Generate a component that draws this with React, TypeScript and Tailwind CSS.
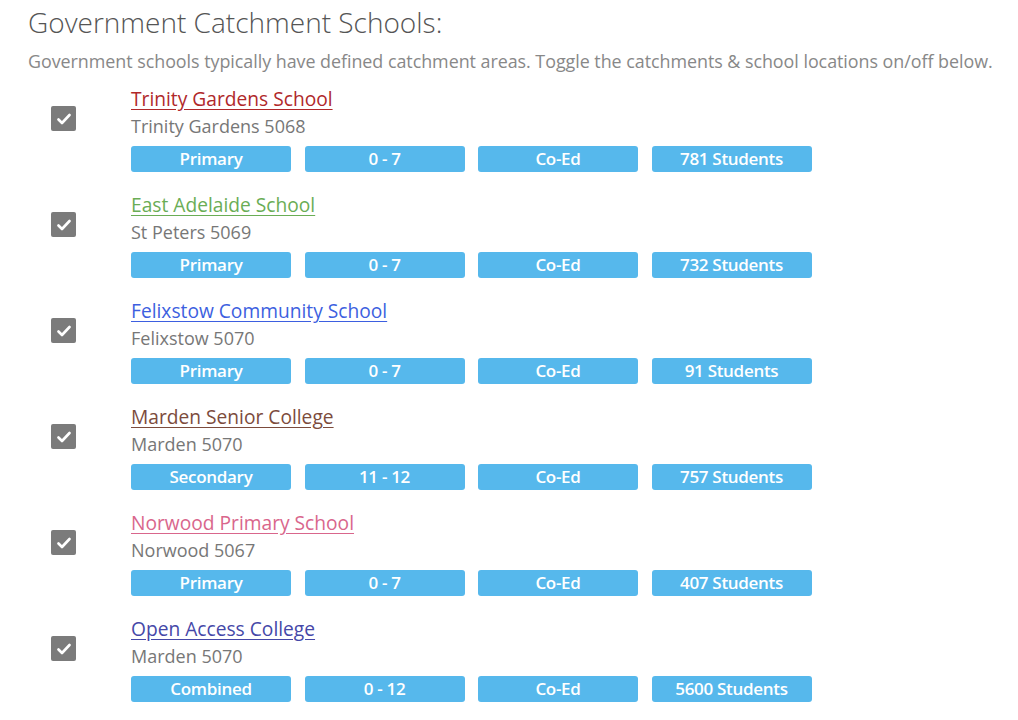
const schools = [
  { name: "Trinity Gardens School", color: "text-[#b0282a] decoration-[#b0282a]", suburb: "Trinity Gardens 5068", type: "Primary", years: "0 - 7", gender: "Co-Ed", students: "781 Students" },
  { name: "East Adelaide School", color: "text-[#6aad55] decoration-[#6aad55]", suburb: "St Peters 5069", type: "Primary", years: "0 - 7", gender: "Co-Ed", students: "732 Students" },
  { name: "Felixstow Community School", color: "text-[#3d5fe0] decoration-[#3d5fe0]", suburb: "Felixstow 5070", type: "Primary", years: "0 - 7", gender: "Co-Ed", students: "91 Students" },
  { name: "Marden Senior College", color: "text-[#7c4b3c] decoration-[#7c4b3c]", suburb: "Marden 5070", type: "Secondary", years: "11 - 12", gender: "Co-Ed", students: "757 Students" },
  { name: "Norwood Primary School", color: "text-[#d9668c] decoration-[#d9668c]", suburb: "Norwood 5067", type: "Primary", years: "0 - 7", gender: "Co-Ed", students: "407 Students" },
  { name: "Open Access College", color: "text-[#4547a8] decoration-[#4547a8]", suburb: "Marden 5070", type: "Combined", years: "0 - 12", gender: "Co-Ed", students: "5600 Students" },
];

function Check() {
  return (
    <div className="w-[25px] h-[25px] rounded-[2px] bg-[#7b7b7b] flex items-center justify-center">
      <svg width="14" height="12" viewBox="0 0 14 12">
        <path d="M1.5 6.5 L5 10 L12.5 2" fill="none" stroke="white" strokeWidth="2.6" strokeLinecap="round" strokeLinejoin="round" />
      </svg>
    </div>
  );
}

function Badge({ label }: { label: string }) {
  return (
    <div className="w-[160px] h-[26px] rounded-[3px] bg-[#56b8ec] text-white text-[17px] font-semibold leading-[26px] text-center tracking-[-0.3px]">
      {label}
    </div>
  );
}

export default function App() {
  return (
    <div className="bg-white min-h-screen px-[28px] pt-[4px] font-['Open_Sans',sans-serif]">
      <h2 className="text-[28px] font-light leading-[36px] text-[#555]">Government Catchment Schools:</h2>
      <p className="mt-[9px] text-[17.9px] leading-[24px] text-[#888] whitespace-nowrap tracking-[-0.04px]">
        Government schools typically have defined catchment areas. Toggle the catchments &amp; school locations on/off below.
      </p>
      <div className="mt-[13px]">
        {schools.map((s) => (
          <div key={s.name} className="flex pb-[20px]">
            <div className="w-[103px] pl-[23px] pt-[20px]">
              <Check />
            </div>
            <div className="flex flex-col">
              <a href="#" className={`text-[19.2px] leading-[26px] underline underline-offset-[3px] ${s.color}`}>{s.name}</a>
              <div className="text-[18px] leading-[28px] text-[#777]">{s.suburb}</div>
              <div className="mt-[6px] flex gap-[13.5px]">
                <Badge label={s.type} />
                <Badge label={s.years} />
                <Badge label={s.gender} />
                <Badge label={s.students} />
              </div>
            </div>
          </div>
        ))}
      </div>
    </div>
  );
}
